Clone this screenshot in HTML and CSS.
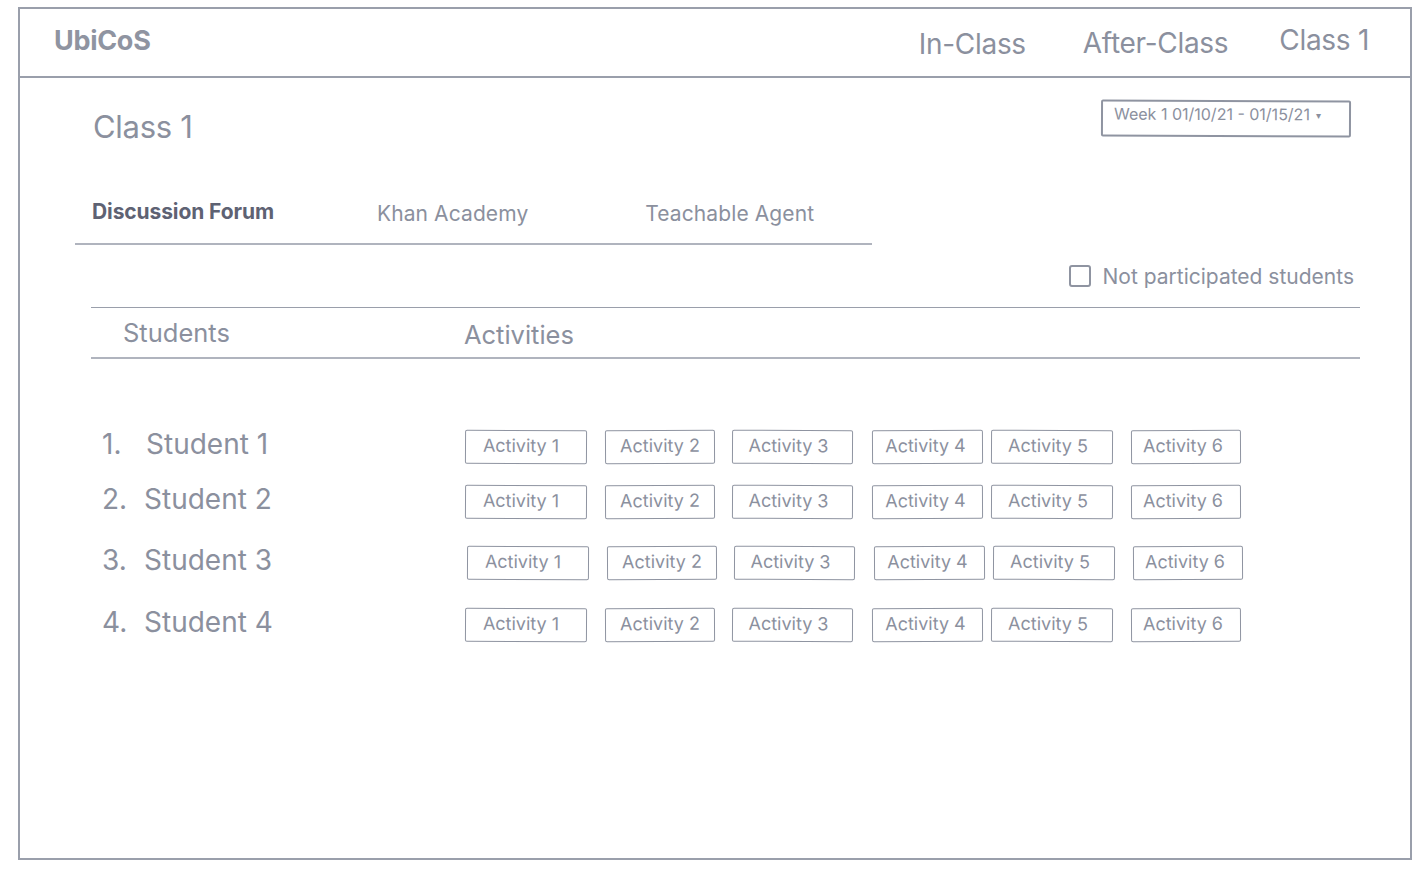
FILE: index.html
```html
<!DOCTYPE html>
<html>
<head>
<meta charset="utf-8">
<link rel="stylesheet" href="styles.css">
</head>
<body>
<div class="frame">
  <header class="topbar">
    <div class="brand">UbiCoS</div>
    <nav class="nav">
      <span class="nav-item nav-in">In-Class</span>
      <span class="nav-item nav-after">After-Class</span>
      <span class="nav-item nav-class">Class 1</span>
    </nav>
  </header>
  <main class="content">
    <div class="title-row">
      <h1 class="title">Class 1</h1>
      <div class="week">Week 1 01/10/21 - 01/15/21 <span class="caret">&#9662;</span></div>
    </div>
    <div class="tabs">
      <span class="tab active">Discussion Forum</span>
      <span class="tab tab-khan">Khan Academy</span>
      <span class="tab tab-agent">Teachable Agent</span>
    </div>
    <div class="filter">
      <span class="checkbox"></span>
      <span class="filter-label">Not participated students</span>
    </div>
    <div class="table-head">
      <span class="th-students">Students</span>
      <span class="th-activities">Activities</span>
    </div>
    <div class="rows">
      <div class="row r1">
        <div class="student"><span class="num">1.</span><span class="name n1">Student 1</span></div>
        <div class="acts">
          <span class="act w1">Activity 1</span><span class="act w2">Activity 2</span><span class="act w3">Activity 3</span><span class="act w4">Activity 4</span><span class="act w5">Activity 5</span><span class="act w6">Activity 6</span>
        </div>
      </div>
      <div class="row r2">
        <div class="student"><span class="num">2.</span><span class="name">Student 2</span></div>
        <div class="acts">
          <span class="act w1">Activity 1</span><span class="act w2">Activity 2</span><span class="act w3">Activity 3</span><span class="act w4">Activity 4</span><span class="act w5">Activity 5</span><span class="act w6">Activity 6</span>
        </div>
      </div>
      <div class="row r3">
        <div class="student"><span class="num">3.</span><span class="name">Student 3</span></div>
        <div class="acts shift">
          <span class="act w1">Activity 1</span><span class="act w2">Activity 2</span><span class="act w3">Activity 3</span><span class="act w4">Activity 4</span><span class="act w5">Activity 5</span><span class="act w6">Activity 6</span>
        </div>
      </div>
      <div class="row r4">
        <div class="student"><span class="num">4.</span><span class="name">Student 4</span></div>
        <div class="acts">
          <span class="act w1">Activity 1</span><span class="act w2">Activity 2</span><span class="act w3">Activity 3</span><span class="act w4">Activity 4</span><span class="act w5">Activity 5</span><span class="act w6">Activity 6</span>
        </div>
      </div>
    </div>
  </main>
</div>
</body>
</html>
```

FILE: styles.css
```css
* { box-sizing: border-box; }
html, body { margin: 0; padding: 0; background: #ffffff; }
body {
  width: 1426px;
  height: 870px;
  font-family: Inter, "Noto Sans", sans-serif;
  color: #8b909e;
  padding: 7px 0 0 18px;
  overflow: hidden;
}
.frame {
  width: 1394px;
  height: 853px;
  border: 2px solid #9a9fab;
  display: flex;
  flex-direction: column;
}
.topbar {
  height: 69px;
  border-bottom: 2px solid #9a9fab;
  display: flex;
  align-items: center;
  justify-content: space-between;
  padding: 0 41px 0 34px;
}
.brand {
  font-size: 27px;
  font-weight: 700;
  color: #8f94a1;
  letter-spacing: -0.3px;
  margin-top: -4px;
}
.nav { display: flex; align-items: center; }
.nav-item { font-size: 28px; color: #8b909e; letter-spacing: -0.3px; }
.nav-in { margin-top: 2px; }
.nav-after { margin-left: 57px; margin-top: 0; }
.nav-class { margin-left: 51px; margin-top: -5px; }
.content {
  flex: 1;
  padding: 0 0 0 55px;
}
.title-row {
  display: flex;
  justify-content: space-between;
  align-items: flex-start;
  height: 108px;
  padding-right: 59px;
}
.title {
  margin: 30px 0 0 18px;
  font-size: 31px;
  font-weight: 400;
  color: #8b909e;
  letter-spacing: -0.3px;
}
.week {
  margin-top: 22px;
  width: 250px;
  height: 37px;
  border: 2px solid #8f94a1;
  border-radius: 2px;
  font-size: 16px;
  color: #8b909e;
  padding: 2px 0 0 11px;
  transform: rotate(0.2deg);
}
.caret { font-size: 10px; margin-left: 2px; vertical-align: 1px; }
.tabs {
  width: 797px;
  height: 59px;
  border-bottom: 2px solid #b0b4be;
  display: flex;
  align-items: center;
  padding-bottom: 2px;
}
.tab { font-size: 21px; color: #8b909e; letter-spacing: 0.1px; }
.tab.active { font-weight: 700; color: #5e6273; margin-left: 17px; font-size: 21px; margin-top: -4px; letter-spacing: -0.1px; }
.tab-khan { margin-left: 103px; }
.tab-agent { margin-left: 117px; }
.filter {
  display: flex;
  justify-content: flex-end;
  align-items: center;
  height: 62px;
  padding-right: 56px;
  gap: 12px;
}
.checkbox {
  width: 22px;
  height: 22px;
  border: 2px solid #8f94a1;
  border-radius: 3px;
}
.filter-label { font-size: 21px; color: #8b909e; }
.table-head {
  margin-left: 16px;
  width: 1269px;
  height: 52px;
  border-top: 1px solid #9a9fab;
  border-bottom: 2px solid #b0b4be;
  display: flex;
  align-items: center;
}
.th-students { font-size: 25.5px; margin-left: 32px; margin-top: 0; }
.th-activities { font-size: 25.5px; margin-left: 234px; margin-top: 3px; }
.rows {
  padding-top: 71px;
  display: flex;
  flex-direction: column;
}
.row { display: flex; align-items: center; height: 34px; }
.r2 { margin-top: 21px; }
.r3 { margin-top: 27px; }
.r4 { margin-top: 28px; }
.student {
  width: 390px;
  display: flex;
  align-items: center;
  font-size: 28px;
  color: #8b909e;
  padding-left: 27px;
  margin-top: -7px;
}
.num { width: 42px; }
.name.n1 { margin-left: 2px; }
.acts { display: flex; align-items: center; }
.acts.shift { margin-left: 2px; }
.act {
  height: 34px;
  border: 1.5px solid #8f94a1;
  border-radius: 2px;
  font-size: 18px;
  color: #8b909e;
  display: flex;
  align-items: center;
  justify-content: center;
  padding-bottom: 3px;
}
.w1 { width: 122px; padding-right: 10px; transform: rotate(0.3deg); }
.w2 { width: 110px; margin-left: 18px; transform: rotate(-0.3deg); }
.w3 { width: 121px; margin-left: 17px; padding-right: 8px; transform: rotate(0.3deg); }
.w4 { width: 111px; margin-left: 19px; padding-right: 4px; transform: rotate(-0.3deg); }
.w5 { width: 122px; margin-left: 8px; padding-right: 8px; transform: rotate(0.3deg); }
.w6 { width: 110px; margin-left: 18px; padding-right: 6px; transform: rotate(-0.3deg); }
```
